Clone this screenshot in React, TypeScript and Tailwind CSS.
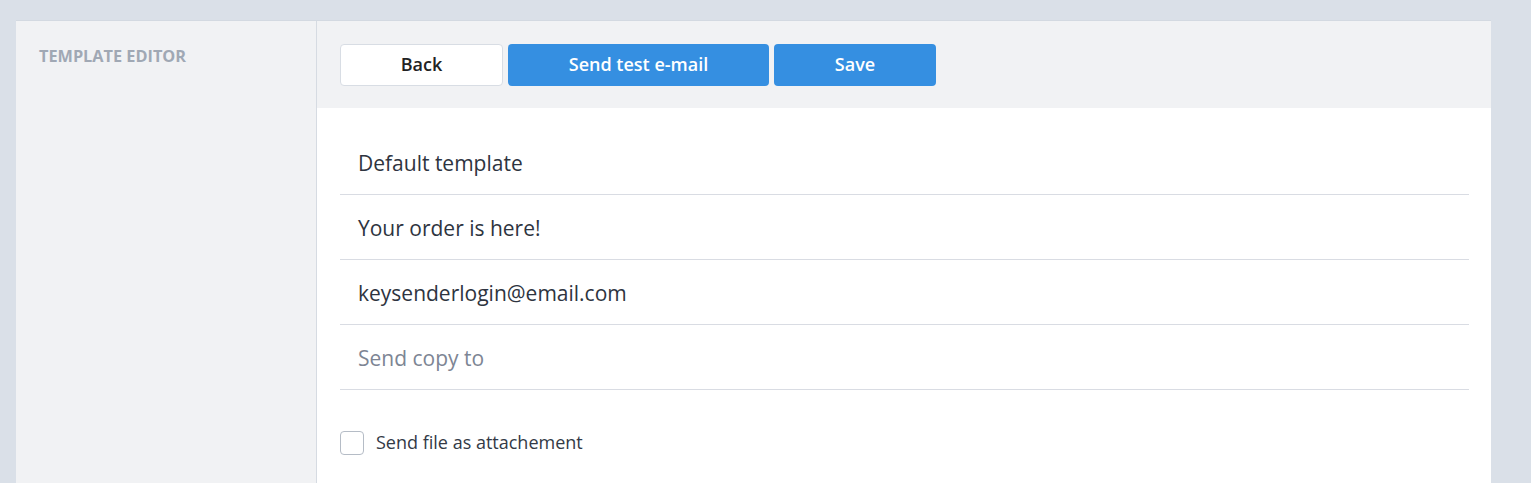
import React, { useState } from "react";

export default function App() {
  const [attach, setAttach] = useState(false);
  const [copyTo, setCopyTo] = useState("");

  return (
    <div className="min-h-screen bg-[#dae0e8] pt-[20px] px-[16px] pr-[40px] font-['Open_Sans',sans-serif]">
      <div className="flex h-[463px] border-t border-[#d3d9e1] bg-white">
        <div className="w-[301px] shrink-0 border-r border-[#d6dbe2] bg-[#f1f2f4] px-[23px] pt-[23px]">
          <p className="text-[16.3px] font-bold uppercase text-[#a0a8b4]">Template editor</p>
        </div>

        <div className="flex flex-1 flex-col">
          <div className="flex h-[87px] items-center gap-[5px] bg-[#f1f2f4] px-[23px] pt-[1px]">
            <button className="h-[42px] w-[163px] rounded-[4px] border border-[#d8dde4] bg-white pb-[2px] text-[18px] font-semibold text-[#222]">
              Back
            </button>
            <button className="h-[42px] w-[261px] rounded-[4px] bg-[#358fe1] pb-[2px] text-[18px] font-semibold text-white">
              Send test e-mail
            </button>
            <button className="h-[42px] w-[162px] rounded-[4px] bg-[#358fe1] pb-[2px] text-[18px] font-semibold text-white">
              Save
            </button>
          </div>

          <div className="flex flex-col px-[23px] pr-[22px] pt-[22px]">
            {["Default template", "Your order is here!", "keysenderlogin@email.com"].map((v) => (
              <div key={v} className="flex h-[65px] items-center border-b border-[#d9dce3] px-[18px] pt-[4px]">
                <span className="text-[21px] text-[#2e3440]">{v}</span>
              </div>
            ))}
            <div className="flex h-[65px] items-center border-b border-[#d9dce3] px-[18px] pt-[4px]">
              <input
                value={copyTo}
                onChange={(e) => setCopyTo(e.target.value)}
                placeholder="Send copy to"
                className="w-full bg-transparent text-[21px] text-[#2e3440] outline-none placeholder:text-[#7d8594]"
              />
            </div>

            <label className="mt-[39px] flex cursor-pointer items-center gap-[12px]">
              <span
                onClick={() => setAttach(!attach)}
                className="flex h-[24px] w-[24px] items-center justify-center rounded-[4px] border border-[#b5bcc6] bg-white"
              >
                {attach && (
                  <svg width="14" height="14" viewBox="0 0 24 24" fill="none" stroke="#358fe1" strokeWidth="3">
                    <path d="M5 12l5 5L20 7" />
                  </svg>
                )}
              </span>
              <span className="pb-[1px] text-[18px] text-[#333a46]">Send file as attachement</span>
            </label>
          </div>
        </div>
      </div>
    </div>
  );
}
